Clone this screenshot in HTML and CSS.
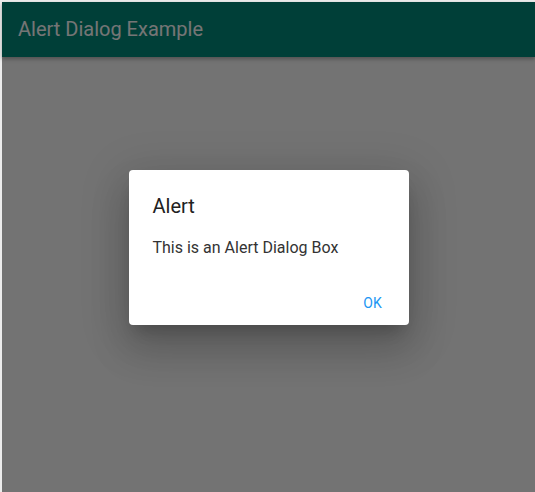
FILE: index.html
```html
<!DOCTYPE html>
<html>
<head>
<meta charset="utf-8">
<link rel="stylesheet" href="styles.css">
</head>
<body>
<div class="screen">
  <header class="appbar">
    <h1 class="appbar-title">Alert Dialog Example</h1>
  </header>
  <main class="content"></main>
  <div class="overlay">
    <div class="dialog">
      <h2 class="dialog-title">Alert</h2>
      <p class="dialog-body">This is an Alert Dialog Box</p>
      <div class="dialog-actions">
        <button class="btn-text">OK</button>
      </div>
    </div>
  </div>
</div>
</body>
</html>
```
FILE: styles.css
```css
html, body {
  margin: 0;
  padding: 0;
  width: 535px;
  height: 492px;
  overflow: hidden;
  background: #ececec;
  font-family: Roboto, "Liberation Sans", sans-serif;
}
.screen {
  position: relative;
  margin: 2px 0 0 2px;
  height: 490px;
  background: #fafafa;
  display: flex;
  flex-direction: column;
}
.appbar {
  height: 55px;
  background: #00897b;
  display: flex;
  align-items: center;
  padding-left: 16px;
  box-shadow: 0 2px 4px rgba(0,0,0,0.3);
  position: relative;
  z-index: 1;
}
.appbar-title {
  margin: 0;
  font-size: 20px;
  font-weight: 400;
  color: #fff;
  padding-bottom: 2px;
}
.content {
  flex: 1;
}
.overlay {
  position: absolute;
  left: 0;
  top: 0;
  right: 0;
  bottom: 0;
  background: rgba(0,0,0,0.54);
  z-index: 2;
  display: flex;
  align-items: center;
  justify-content: center;
}
.dialog {
  width: 280px;
  background: #fff;
  border-radius: 4px;
  box-shadow: 0 11px 15px -7px rgba(0,0,0,0.2), 0 24px 38px 3px rgba(0,0,0,0.14), 0 9px 46px 8px rgba(0,0,0,0.12);
}
.dialog-title {
  margin: 0;
  padding: 24px 24px 0;
  font-size: 20px;
  font-weight: 400;
  color: #212121;
}
.dialog-body {
  margin: 0;
  padding: 20px 24px 24px;
  font-size: 16px;
  color: #333;
}
.dialog-actions {
  display: flex;
  justify-content: flex-end;
  padding: 4px 4px 4px;
}
.btn-text {
  min-width: 64px;
  height: 36px;
  border: none;
  background: transparent;
  color: #2196f3;
  font-family: Roboto, "Liberation Sans", sans-serif;
  font-size: 14px;
  font-weight: 400;
  padding: 0 8px;
}
```
